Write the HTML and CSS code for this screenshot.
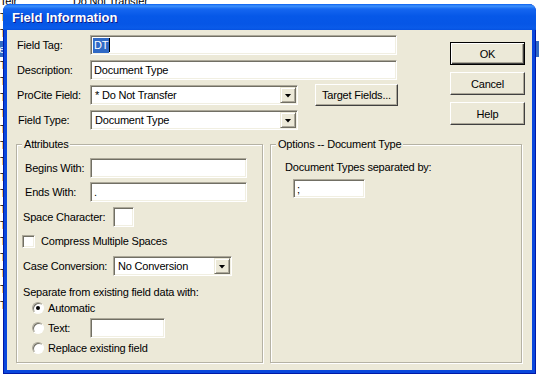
FILE: index.html
```html
<!DOCTYPE html>
<html>
<head>
  <title>Field Information</title>
  <link rel="stylesheet" href="styles.css">
</head>
<body>
  <div class="list">
    <div class="row"><span class="c1">Telr</span><span class="c2">Do Not Transfer</span></div>
    <div class="row"><span class="c1">T</span></div>
    <div class="row"><span class="c1">T</span></div>
    <div class="row sel"><span class="c1 tail">e</span></div>
    <div class="row"><span class="c1">T</span></div>
    <div class="row"><span class="c1">T</span></div>
    <div class="row"><span class="c1">T</span></div>
    <div class="row"><span class="c1">T</span></div>
    <div class="row"><span class="c1">T</span></div>
    <div class="row"><span class="c1">T</span></div>
    <div class="row"><span class="c1">T</span></div>
    <div class="row"><span class="c1">T</span></div>
    <div class="row"><span class="c1">T</span></div>
    <div class="row"><span class="c1">T</span></div>
    <div class="row"><span class="c1">T</span></div>
    <div class="row"><span class="c1">T</span></div>
    <div class="row"><span class="c1">T</span></div>
    <div class="row"><span class="c1">T</span></div>
    <div class="row"><span class="c1">T</span></div>
    <div class="row"><span class="c1">T</span></div>
  </div>

  <div class="dialog">
    <div class="titlebar">Field Information</div>
    <div class="client">
      <div class="top">
        <div class="form">
          <span class="lbl">Field Tag:</span>
          <div class="edit span3"><span class="hilite">DT</span><span class="caret"></span></div>

          <span class="lbl">Description:</span>
          <div class="edit span3">Document Type</div>

          <span class="lbl">ProCite Field:</span>
          <div class="edit combo"><span class="txt">* Do Not Transfer</span><span class="drop"></span></div>
          <span></span>
          <div class="btn target">Target Fields...</div>

          <span class="lbl lbl-shift">Field Type:</span>
          <div class="edit combo"><span class="txt">Document Type</span><span class="drop"></span></div>
        </div>

        <div class="buttons">
          <div class="btn default">OK</div>
          <div class="btn">Cancel</div>
          <div class="btn">Help</div>
        </div>
      </div>

      <div class="groups">
        <div class="group attrs">
          <span class="legend">Attributes</span>

          <div class="line r-begins">
            <span class="lbl w-short">Begins With:</span>
            <div class="edit attr-edit"></div>
          </div>
          <div class="line r-ends">
            <span class="lbl w-short">Ends With:</span>
            <div class="edit attr-edit">.</div>
          </div>
          <div class="line r-space">
            <span class="lbl w-long">Space Character:</span>
            <div class="edit space-edit"></div>
          </div>
          <div class="line r-check">
            <span class="check"></span>
            <span>Compress Multiple Spaces</span>
          </div>
          <div class="line r-case">
            <span class="lbl w-long">Case Conversion:</span>
            <div class="edit combo case-combo"><span class="txt">No Conversion</span><span class="drop"></span></div>
          </div>
          <div class="line r-sep">Separate from existing field data with:</div>
          <div class="line r-auto">
            <span class="radio on"></span><span>Automatic</span>
          </div>
          <div class="line r-text">
            <span class="radio"></span><span class="radio-lbl">Text:</span>
            <div class="edit text-edit"></div>
          </div>
          <div class="line r-replace">
            <span class="radio"></span><span>Replace existing field</span>
          </div>
        </div>

        <div class="group opts">
          <span class="legend">Options -- Document Type</span>
          <div class="opt-lbl">Document Types separated by:</div>
          <div class="edit sep-edit">;</div>
        </div>
      </div>
    </div>
  </div>
</body>
</html>
```

FILE: styles.css
```css
body {
  margin: 0;
  width: 539px;
  height: 374px;
  overflow: hidden;
  position: relative;
  background: #fff;
  font: 11px "Liberation Sans", Arial, sans-serif;
  letter-spacing: -0.2px;
  color: #000;
}

/* window behind the dialog */
.list {
  position: absolute;
  left: 0;
  right: 0;
  top: -7px;
}
.row {
  display: flex;
  height: 16px;
  line-height: 16px;
  white-space: nowrap;
}
.row .c1 { width: 73px; }
.row.sel { background: #316ac5; color: #fff; }
.row .tail { margin-left: -1px; }

/* dialog frame */
.dialog {
  position: absolute;
  left: 3px;
  top: 4px;
  width: 533px;
  height: 370px;
  box-sizing: border-box;
  display: flex;
  flex-direction: column;
  padding: 0 3px 3px;
  background: #0a47dc;
  border: 1px solid #0019a8;
  border-top: none;
  border-radius: 7px 7px 0 0;
}
.titlebar {
  height: 26px;
  margin: 0 -4px;
  padding-left: 9px;
  border-radius: 7px 7px 0 0;
  background: linear-gradient(#0a5ff0 0, #3d91fb 2px, #1566f0 5px, #0658e8 12px, #0656e6 20px, #0a5be9 24px, #0550e0 26px);
  color: #fff;
  font: bold 13px "Liberation Sans", Arial, sans-serif;
  letter-spacing: 0;
  line-height: 27px;
  text-shadow: 1px 1px 0 #0f1a89;
}
.client {
  flex: 1;
  background: #ece9d8;
}

/* top part */
.top {
  display: flex;
  padding: 5px 0 0 10px;
}
.form {
  display: grid;
  grid-template-columns: 73px 208px 17px 82px;
  grid-template-rows: repeat(4, 20px);
  row-gap: 5px;
  align-items: center;
}
.lbl { white-space: nowrap; }
.lbl-shift { padding-left: 1px; }
.span3 { grid-column: span 3; }

.buttons {
  display: flex;
  flex-direction: column;
  gap: 7px;
  margin-left: 53px;
  padding-top: 7px;
}

/* controls */
.edit {
  box-sizing: border-box;
  height: 20px;
  display: flex;
  align-items: center;
  padding-left: 3px;
  background: #fff;
  border: 1px solid;
  border-color: #aca899 #fff #fff #aca899;
  box-shadow: inset 1px 1px 0 #716f64, inset -1px -1px 0 #f1efe2;
  white-space: nowrap;
  overflow: hidden;
}
.hilite {
  background: #316ac5;
  color: #fff;
  line-height: 15px;
  padding: 0 1px;
  margin-left: -1px;
}
.caret {
  width: 1px;
  height: 14px;
  background: #000;
}
.combo { padding-right: 1px; }
.combo .txt { flex: 1; padding-left: 1px; }
.drop {
  box-sizing: border-box;
  width: 16px;
  height: 16px;
  display: flex;
  align-items: center;
  justify-content: center;
  background: #ece9d8;
  border: 1px solid;
  border-color: #ece9d8 #716f64 #716f64 #ece9d8;
  box-shadow: inset 1px 1px 0 #fff, inset -1px -1px 0 #aca899;
}
.drop::after {
  content: "";
  width: 7px;
  height: 4px;
  margin-top: 1px;
  background: #000;
  clip-path: polygon(0 0, 100% 0, 50% 100%);
}

.btn {
  box-sizing: border-box;
  width: 75px;
  height: 23px;
  display: flex;
  align-items: center;
  justify-content: center;
  background: #ece9d8;
  border: 1px solid;
  border-color: #fff #404040 #404040 #fff;
  box-shadow: inset -1px -1px 0 #aca899;
  white-space: nowrap;
}
.btn.default {
  border-color: #000;
  box-shadow: inset 1px 1px 0 #fff, inset -1px -1px 0 #404040, inset -2px -2px 0 #aca899;
}
.btn.target {
  width: 83px;
  height: 22px;
}

/* group boxes */
.groups {
  display: flex;
  gap: 7px;
  margin-top: 14px;
  padding-left: 9px;
}
.group {
  position: relative;
  box-sizing: border-box;
  height: 219px;
  border: 1px solid #b5b2a4;
  box-shadow: 1px 1px 0 #fff, inset 1px 1px 0 #fff;
}
.legend {
  position: absolute;
  top: -8px;
  left: 5px;
  padding: 0 2px;
  background: #ece9d8;
  line-height: 14px;
  white-space: nowrap;
}
.attrs {
  width: 247px;
  padding: 13px 0 0 6px;
}
.opts {
  width: 252px;
  padding: 15px 0 0 14px;
}

.line {
  display: flex;
  align-items: center;
  height: 20px;
  white-space: nowrap;
}
.w-short { width: 65px; margin-left: 2px; }
.w-long { width: 90px; }
.attr-edit { width: 157px; }
.space-edit { width: 21px; }
.case-combo { width: 119px; }
.r-ends { margin-top: 4px; }
.r-space { margin-top: 5px; }
.r-check { margin-top: 4px; }
.r-case { margin-top: 5px; }
.r-sep { margin-top: 9px; height: 14px; }
.r-auto { height: 18px; }
.r-text { margin-top: 1px; }
.r-replace { margin-top: 1px; height: 18px; }

.check {
  box-sizing: border-box;
  width: 13px;
  height: 13px;
  margin: 0 6px 0 -1px;
  background: #fff;
  border: 1px solid;
  border-color: #aca899 #fff #fff #aca899;
  box-shadow: inset 1px 1px 0 #716f64, inset -1px -1px 0 #f1efe2;
}
.radio {
  position: relative;
  box-sizing: border-box;
  width: 12px;
  height: 12px;
  margin: 0 4px 0 9px;
  border-radius: 50%;
  background: #fff;
  border: 1px solid;
  border-color: #aca899 #fff #fff #aca899;
  box-shadow: inset 1px 1px 0 #716f64;
}
.radio.on::after {
  content: "";
  position: absolute;
  left: 3px;
  top: 3px;
  width: 4px;
  height: 4px;
  border-radius: 50%;
  background: #000;
}
.radio-lbl { width: 42px; }
.text-edit { width: 75px; }

.opt-lbl {
  line-height: 14px;
  white-space: nowrap;
}
.sep-edit {
  width: 72px;
  height: 19px;
  margin: 5px 0 0 8px;
}
```
